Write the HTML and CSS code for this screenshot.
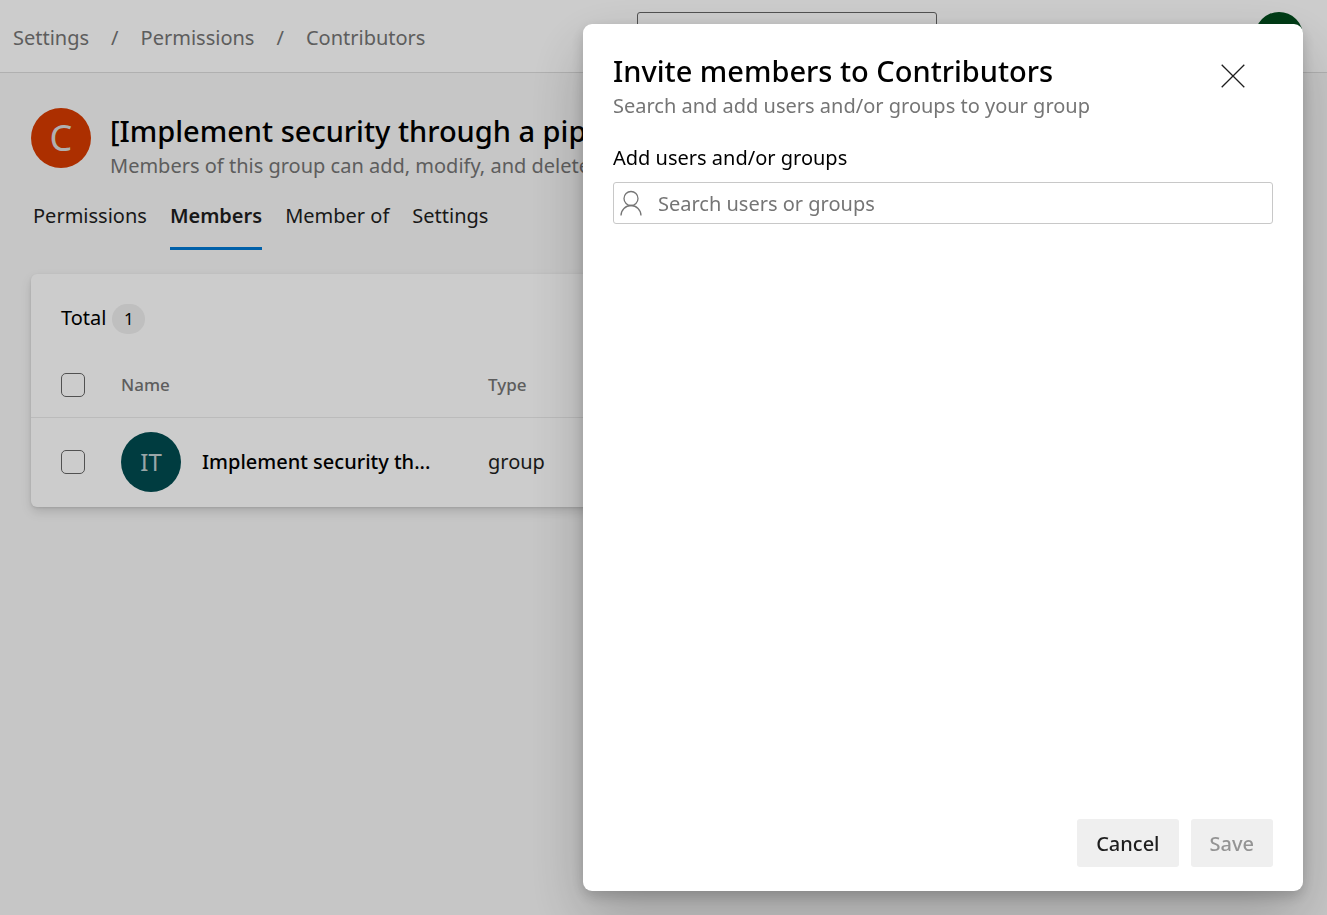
FILE: index.html
```html
<!DOCTYPE html>
<html lang="en">
	<head>
		<meta charset="utf-8">
		<title>Contributors - Permissions</title>
		<link rel="stylesheet" href="styles.css">
	</head>
	<body>
		<header class="topbar">
			<nav class="crumbs">
				<a href="#">Settings</a>
				<span>/</span>
				<a href="#">Permissions</a>
				<span>/</span>
				<a href="#">Contributors</a>
			</nav>
			<div class="tools">
				<input class="site-search" type="search" aria-label="Search">
				<button class="account" aria-label="Account"></button>
			</div>
		</header>

		<main class="page">
			<div class="group-head">
				<div class="avatar red">C</div>
				<div class="group-text">
					<h1>[Implement security through a pipe</h1>
					<p>Members of this group can add, modify, and delete</p>
				</div>
			</div>
			<nav class="tabs">
				<a href="#">Permissions</a>
				<a href="#" class="active">Members</a>
				<a href="#">Member of</a>
				<a href="#">Settings</a>
			</nav>
			<section class="card">
				<div class="total">Total <span class="count">1</span></div>
				<table>
					<thead>
						<tr>
							<th class="check"><input type="checkbox" aria-label="Select all"></th>
							<th class="name">Name</th>
							<th>Type</th>
						</tr>
					</thead>
					<tbody>
						<tr>
							<td class="check"><input type="checkbox" aria-label="Select group"></td>
							<td class="name">
								<div class="member">
									<span class="avatar teal">IT</span>
									<span class="member-name">Implement security th...</span>
								</div>
							</td>
							<td>group</td>
						</tr>
					</tbody>
				</table>
			</section>
		</main>

		<!-- invite panel -->
		<div class="overlay">
			<div class="panel" role="dialog" aria-labelledby="panel-title">
				<div class="panel-head">
					<div>
						<h2 id="panel-title">Invite members to Contributors</h2>
						<p>Search and add users and/or groups to your group</p>
					</div>
					<button class="close" aria-label="Close">
						<svg width="24" height="24" viewBox="0 0 24 24"><path d="M.7.7l22.6 22.6M23.3.7L.7 23.3"/></svg>
					</button>
				</div>
				<div class="panel-body">
					<label for="users">Add users and/or groups</label>
					<div class="field">
						<svg width="22" height="26" viewBox="0 0 22 26"><circle cx="11" cy="8.5" r="7"/><path d="M1 25.5a10 10 0 0 1 20 0"/></svg>
						<input id="users" type="text" placeholder="Search users or groups">
					</div>
				</div>
				<div class="panel-foot">
					<button class="btn">Cancel</button>
					<button class="btn" disabled>Save</button>
				</div>
			</div>
		</div>
	</body>
</html>
```
FILE: styles.css
```css
*{
	box-sizing: border-box;
}
body{
	margin: 0;
	min-height: 100vh;
	background: #f8f8f8;
	color: #1e1e1e;
	font: 20px/28px "Segoe UI", "Noto Sans", sans-serif;
	overflow: hidden;
}
h1,h2,p{
	margin: 0;
}
h1,h2{
	padding-bottom: 2px;
	color: #000;
	font-size: 29px;
	line-height: 39px;
	font-weight: 500;
}
a{
	color: inherit;
	text-decoration: none;
}
input,button{
	font: inherit;
	color: inherit;
}
.topbar{
	display: flex;
	justify-content: space-between;
	height: 73px;
	padding: 12px 24px 0 13px;
	background: #fff;
	border-bottom: 1px solid #dcdcdc;
}
.crumbs{
	display: flex;
	gap: 22px;
	padding-top: 12px;
	color: #757575;
}
.tools{
	display: flex;
	gap: 318px;
}
.site-search{
	width: 300px;
	height: 48px;
	border: 1px solid #666;
	border-radius: 3px;
	background: #fff;
}
.account{
	width: 48px;
	height: 48px;
	border: none;
	border-radius: 50%;
	background: #004b1c;
}
.page{
	padding: 35px 31px;
}
.group-head{
	display: flex;
	gap: 19px;
}
.group-text{
	padding-top: 3px;
	white-space: nowrap;
}
.group-text p,.panel-head p{
	color: #757575;
}
.avatar{
	flex: none;
	width: 60px;
	height: 60px;
	border-radius: 50%;
	color: #ddd;
	line-height: 60px;
	text-align: center;
}
.red{
	background: #d83b01;
	font-size: 36px;
}
.teal{
	background: #004b50;
	color: #c0d0d2;
	font-size: 24px;
}
.tabs{
	display: flex;
	gap: 23px;
	padding: 22px 2px 0;
}
.tabs a{
	height: 48px;
	border-bottom: 3px solid transparent;
}
.tabs .active{
	border-color: #0078d4;
	font-weight: 600;
}
.card{
	margin-top: 24px;
	background: #fff;
	border-radius: 6px;
	box-shadow: 0 5px 11px rgba(0,0,0,.13), 0 1px 3px rgba(0,0,0,.11);
}
.total{
	display: flex;
	align-items: baseline;
	gap: 6px;
	padding: 30px 30px 20px;
	color: #000;
}
.count{
	width: 33px;
	border-radius: 15px;
	background: #efefef;
	font-size: 17px;
	line-height: 30px;
	text-align: center;
}
table{
	width: 100%;
	border-collapse: collapse;
	table-layout: fixed;
}
th,td{
	padding: 0;
	text-align: left;
}
th{
	height: 63px;
	border-bottom: 1px solid #eaeaea;
	color: #757575;
	font-size: 17px;
	font-weight: 500;
}
td{
	height: 90px;
}
.check{
	width: 90px;
	padding-left: 30px;
}
.name{
	width: 367px;
}
input[type=checkbox]{
	appearance: none;
	display: block;
	width: 24px;
	height: 24px;
	margin: 0;
	border: 1px solid #666;
	border-radius: 5px;
}
.member{
	display: flex;
	align-items: center;
	gap: 21px;
}
.member-name{
	color: #000;
	font-weight: 500;
}
.overlay{
	position: fixed;
	inset: 0;
	display: flex;
	justify-content: flex-end;
	padding: 24px;
	background: rgba(0,0,0,.2);
}
.panel{
	display: flex;
	flex-direction: column;
	width: 720px;
	padding: 27px 30px 24px;
	border-radius: 9px;
	background: #fff;
	box-shadow: 0 26px 58px rgba(0,0,0,.22), 0 5px 14px rgba(0,0,0,.18);
}
.panel-head{
	display: flex;
	justify-content: space-between;
}
.close{
	width: 48px;
	height: 50px;
	margin-right: 16px;
	padding: 0;
	border: none;
	background: none;
}
.close svg{
	display: block;
	margin: auto;
}
svg{
	fill: none;
	stroke: #1e1e1e;
	stroke-width: 1.3;
}
.panel-body{
	flex: 1;
	padding-top: 24px;
	color: #000;
}
.field{
	display: flex;
	align-items: center;
	gap: 16px;
	height: 42px;
	margin-top: 10px;
	padding: 0 6px;
	border: 1px solid #c8c8c8;
	border-radius: 3px;
}
.field svg{
	stroke: #757575;
}
.field input{
	flex: 1;
	padding: 2px 0 0;
	border: none;
	outline: none;
	background: none;
}
.field input::placeholder{
	color: #757575;
}
.panel-foot{
	display: flex;
	justify-content: flex-end;
	gap: 12px;
}
.btn{
	height: 48px;
	padding: 2px 19px 0;
	border: none;
	border-radius: 3px;
	background: #efefef;
	font-weight: 500;
}
.btn:disabled{
	color: #949494;
}
```
